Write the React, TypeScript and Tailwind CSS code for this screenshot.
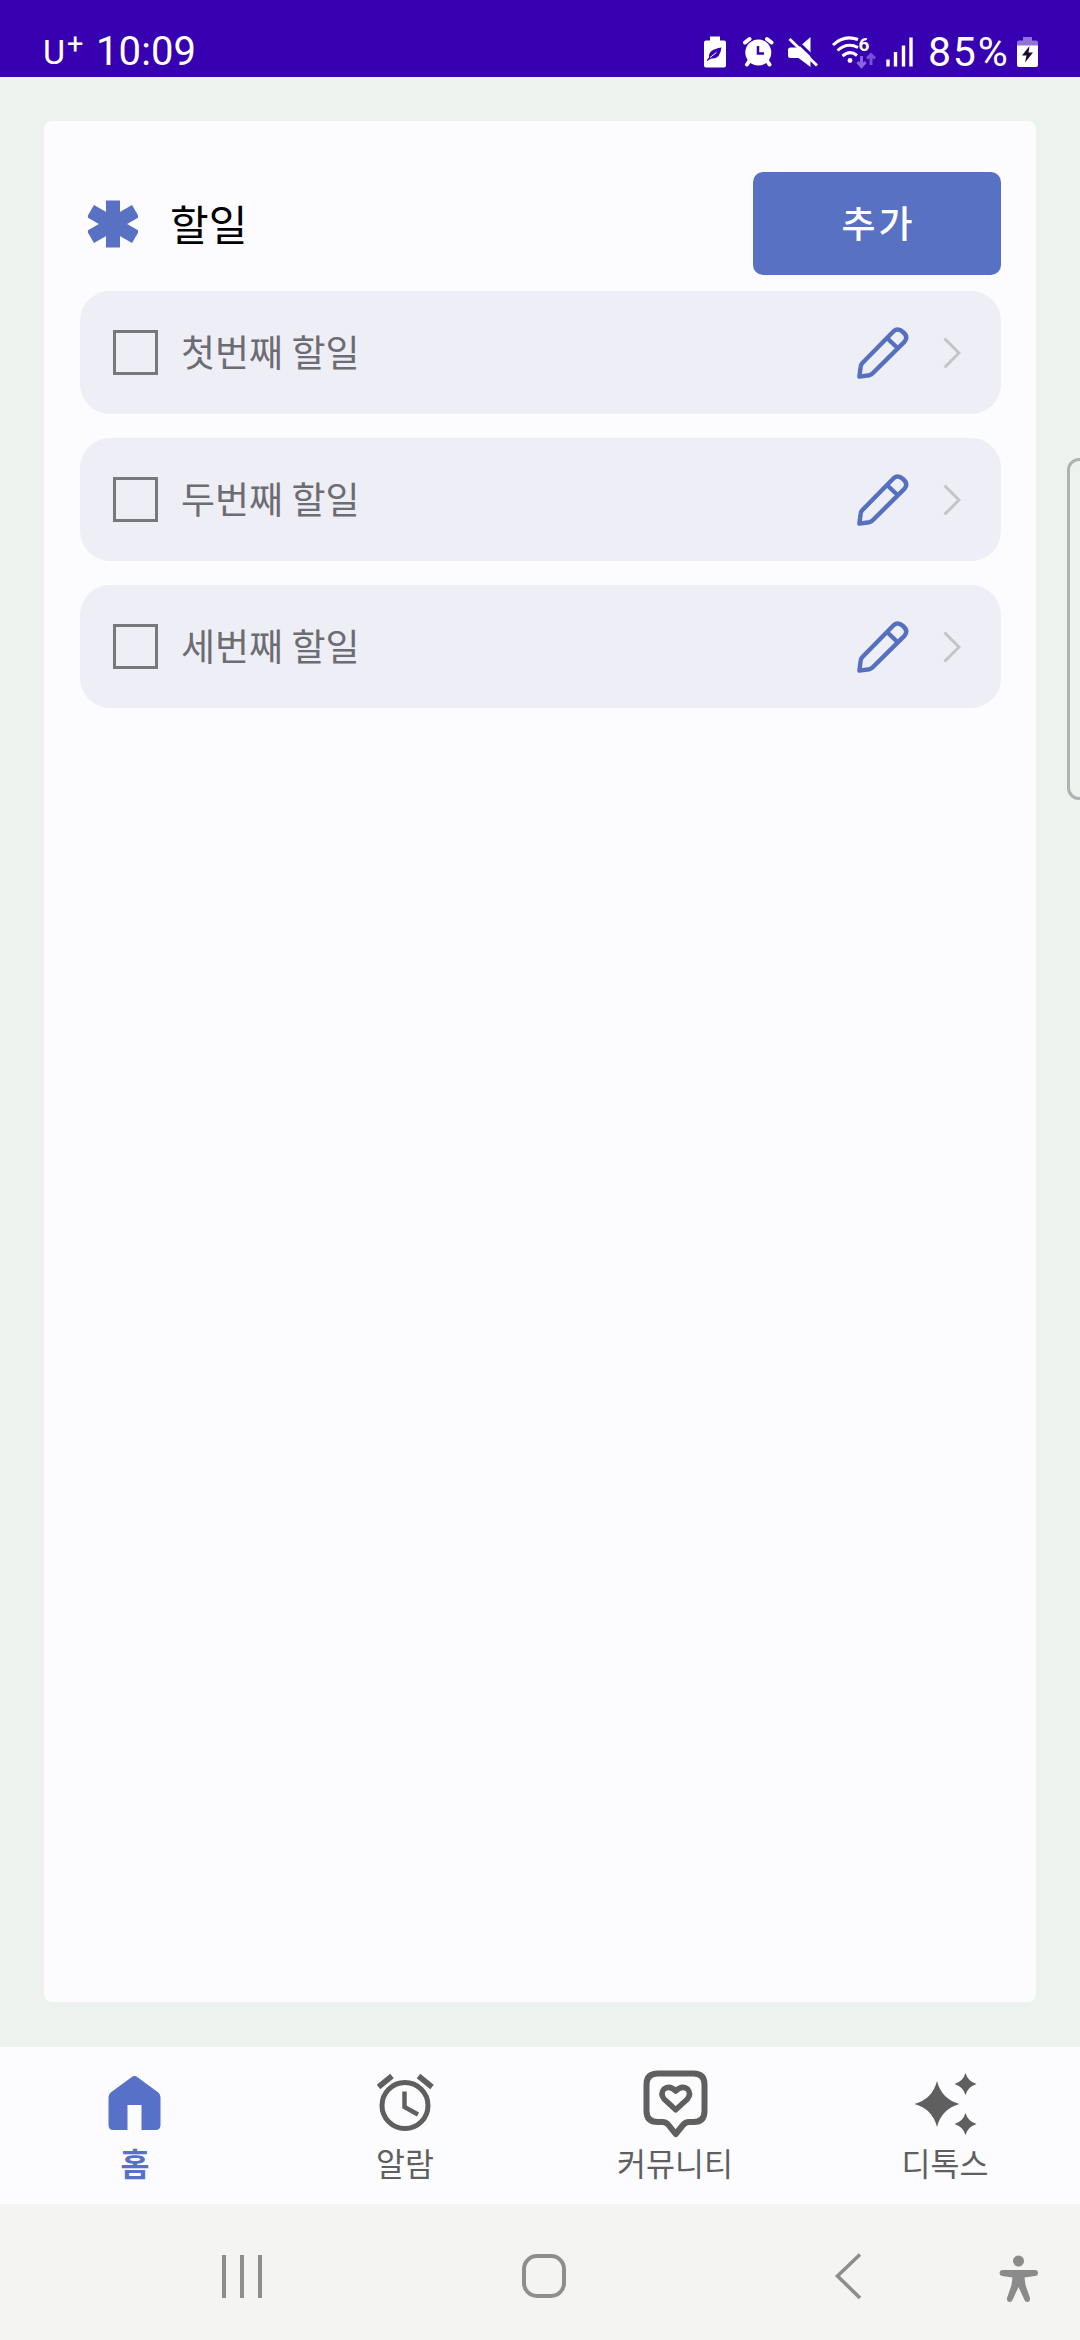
import { useState } from 'react';

const AsteriskIcon = () => (
  <svg className="h-[50px] w-[50px]" viewBox="0 0 50 50" fill="#5871c2">
    <rect x="18" y="1.5" width="14" height="47" />
    <rect x="18" y="-1" width="14" height="52" transform="rotate(60 25 25)" />
    <rect x="18" y="-1" width="14" height="52" transform="rotate(-60 25 25)" />
  </svg>
);

const PencilIcon = () => (
  <svg className="h-[54px] w-[54px]" viewBox="0 0 54 54" fill="none" stroke="#5670c0" strokeWidth="4.400" strokeLinejoin="round">
    <path d="M3.400 50.600 4.600 41Q4.800 38.600 6.400 37L37.600 5.200Q42 1.500 47 6 52.500 10.800 48.600 15.600L17 47Q15.400 48.600 13.400 49.200Z" />
    <path d="M31.500 12.500 41.500 22" />
  </svg>
);

const ChevronIcon = () => (
  <svg className="h-8 w-[18px]" viewBox="0 0 18 32" fill="none" stroke="#c4c4c8" strokeWidth="3">
    <path d="M1.5 1.5 16 16 1.5 30.5" />
  </svg>
);

const HomeIcon = () => (
  <svg className="h-[70px] w-[70px]" viewBox="99.500 2070 70 70">
    <path
      fill="currentColor"
      d="M131 2078.2Q134 2075.8 137 2078.2L157.5 2093.2Q160 2095 160 2098V2126Q160 2131 155 2131H141V2106H127V2131H113Q108 2131 108 2126V2098Q108 2095 110.500 2093.200Z"
    />
  </svg>
);

const AlarmIcon = () => (
  <svg className="h-[70px] w-[70px]" viewBox="370 2070 70 70" fill="none" stroke="currentColor" strokeWidth="5">
    <circle cx="405" cy="2106.500" r="23" />
    <path d="M404.500 2092.500V2108L418 2115.500" strokeWidth="4.500" />
    <path d="M378.500 2088 392 2077M418.500 2077 432 2088" strokeWidth="5.500" />
  </svg>
);

const CommunityIcon = () => (
  <svg className="h-[70px] w-[70px]" viewBox="640 2068.500 70 70" fill="none" stroke="currentColor" strokeWidth="6" strokeLinejoin="round">
    <path d="M658 2073H693.500Q704.500 2073 704.500 2084V2110.500Q704.500 2121.500 693.500 2121.500H689Q685.500 2121.500 683 2124.500L675.700 2133.500 668.500 2124.500Q666 2121.500 662.500 2121.500H658Q646.500 2121.500 646.500 2110.500V2084Q646.500 2073 658 2073Z" />
    <path d="M675.700 2109.300 664 2098.500Q660 2093 664 2088.500 670 2084.500 675.700 2090.500 681.500 2084.500 687.500 2088.500 691.500 2093 687.500 2098.500Z" strokeWidth="5.500" />
  </svg>
);

const SparkleIcon = () => (
  <svg className="h-[70px] w-[70px]" viewBox="909.500 2069 70 70" fill="currentColor">
    <path d="M936.500 2081Q941 2099 959 2104 941 2109 936.500 2127 932 2109 914 2104 932 2099 936.500 2081Z" />
    <path d="M965 2073Q967.500 2081.500 976 2084 967.500 2086.500 965 2095 962.500 2086.500 954 2084 962.500 2081.500 965 2073Z" />
    <path d="M965 2113Q967.500 2121.500 976 2124 967.500 2126.500 965 2135 962.500 2126.500 954 2124 962.500 2121.500 965 2113Z" />
  </svg>
);

const BatterySaverIcon = () => (
  <svg className="h-8 w-6" viewBox="703 35 24 32">
    <path fill="#fff" d="M710 35.500H720V39.500H724Q726 39.500 726 41.500V64.500Q726 66.500 724 66.500H706Q704 66.500 704 64.500V41.500Q704 39.500 706 39.500H710Z" />
    <path fill="#3700b0" d="M721.500 46.500Q720 58.500 711.500 57.500 708.500 58.500 707.500 60L706.800 59.200Q708 57.500 709 56.500 708 48.500 721.500 46.500Z" />
    <path stroke="#fff" strokeWidth="1" d="M710 56.500 716.500 51.500" />
  </svg>
);

const AlarmSetIcon = () => (
  <svg className="h-8 w-8" viewBox="741.500 35 32 32">
    <path stroke="#fff" strokeWidth="4" strokeLinecap="round" d="M744.500 41.500 749 38M766.500 38 771 41.500M748.500 60.500 746.500 63.500M767 60.500 769 63.500" />
    <circle cx="757.800" cy="51.500" r="13" fill="#fff" />
    <path stroke="#3700b0" strokeWidth="2.500" fill="none" d="M757.500 45V52.500H763.500" />
  </svg>
);

const MuteIcon = () => (
  <svg className="h-8 w-8" viewBox="786.500 35 32 32">
    <path fill="#fff" d="M790 46.500H798L810 36V66L798 57H790Q787.500 57 787.500 54.500V49Q787.500 46.500 790 46.500Z" />
    <path stroke="#3700b0" strokeWidth="3" d="M792 36 819 62" />
    <path stroke="#fff" strokeWidth="3" d="M789 38 816.500 64.500" />
  </svg>
);

const WifiIcon = () => (
  <svg className="h-[34px] w-11 overflow-visible" viewBox="832 34 44 34" fill="none">
    <g stroke="#fff" strokeWidth="3">
      <path d="M833 44Q844 33.500 858 38.500" />
      <path d="M837.500 49.500Q847 41 858 46.500" />
      <path d="M842.500 55Q850 48.500 857 54.500" />
    </g>
    <circle cx="850" cy="59.500" r="2.400" fill="#fff" />
    <text x="858.500" y="50" fill="#fff" fontSize="19" fontWeight="700" fontFamily="Roboto, sans-serif">6</text>
    <path stroke="#8a63e0" strokeWidth="3" d="M861.500 55V65M857.500 61 861.500 65.500 865.500 61" />
    <path stroke="#7850d8" strokeWidth="3" d="M871 64V54M867 57.500 871 53.500 875 57.500" />
  </svg>
);

const SignalIcon = () => (
  <svg className="h-8 w-7" viewBox="886 35 28 32" stroke="#fff" strokeWidth="3.400">
    <path d="M888 58.500V65.500M895.500 51V65.500M903.500 44.500V65.500M911 36.500V65.500" />
  </svg>
);

const ChargingIcon = () => (
  <svg className="h-8 w-6" viewBox="1015 35 24 32">
    <path fill="#9272d9" d="M1022 36H1031V39.500H1035Q1037 39.500 1037 41.500V45H1016V41.500Q1016 39.500 1018 39.500H1022Z" />
    <path fill="#fff" d="M1016 44.500H1037V64Q1037 66 1035 66H1018Q1016 66 1016 64Z" />
    <path fill="#1a0a33" d="M1028.500 45 1021 54.500H1025.500L1024 61.500 1032 51.500H1027.500Z" />
  </svg>
);

const StatusBar = () => (
  <header className="flex h-[77px] shrink-0 items-end bg-[#3700b0] pb-[9px] pl-[43px] font-[Roboto,sans-serif] text-white">
    <div className="flex h-8 w-[660px] items-center text-[40px] leading-8">
      <span className="w-6 text-[34px]">U</span>
      <span className="w-[29px] -translate-y-2 text-[29px]">+</span>
      <span className="tracking-[0.1px]">10:09</span>
    </div>
    <div className="flex h-8 items-center">
      <BatterySaverIcon />
      <div className="ml-[15px]"><AlarmSetIcon /></div>
      <div className="ml-[13px]"><MuteIcon /></div>
      <div className="ml-[13px]"><WifiIcon /></div>
      <div className="ml-[10px]"><SignalIcon /></div>
      <span className="ml-[14px] w-[88px] text-[41px] leading-8 tracking-[1.8px]">85%</span>
      <ChargingIcon />
    </div>
  </header>
);

const todos = [
  { id: 1, title: '첫번째 할일' },
  { id: 2, title: '두번째 할일' },
  { id: 3, title: '세번째 할일' },
];

const tabs = [
  { key: 'home', label: '홈', Icon: HomeIcon },
  { key: 'alarm', label: '알람', Icon: AlarmIcon },
  { key: 'community', label: '커뮤니티', Icon: CommunityIcon },
  { key: 'detox', label: '디톡스', Icon: SparkleIcon },
];

const TodoRow = ({ title }: { title: string }) => {
  const [checked, setChecked] = useState(false);

  return (
    <li className="flex h-[123px] items-center rounded-[30px] bg-[#eeeef6] pr-[40px] pl-[33px]">
      <button
        aria-label={title}
        onClick={() => setChecked(!checked)}
        className={`h-[45px] w-[45px] border-3 border-[#77777c] ${checked ? 'bg-[#5871c2]' : ''}`}
      />
      <span className="mb-[3px] ml-[23px] flex-1 text-[37px] leading-[54px] text-[#6c6c72]">{title}</span>
      <PencilIcon />
      <div className="ml-[33px]"><ChevronIcon /></div>
    </li>
  );
};

export default function App() {
  const [activeTab, setActiveTab] = useState('home');

  return (
    <div className="relative flex h-[2340px] w-[1080px] flex-col overflow-hidden bg-[#eef2ee] font-['Noto_Sans_CJK_KR',sans-serif]">
      <StatusBar />

      <main className="flex flex-1 flex-col px-[44px] pt-[44px] pb-[45px]">
        <section className="flex-1 rounded-lg bg-[#fcfcfe] pt-[51px] pr-[35px] pl-[36px]">
          <div className="flex h-[103px] items-center pl-2">
            <AsteriskIcon />
            <h1 className="mb-[2px] ml-[32px] flex-1 text-[42px] leading-[60px] text-black">할일</h1>
            <button className="h-[103px] w-[248px] rounded-[10px] bg-[#5871c2] pb-px pl-[3px] text-[37px] font-medium tracking-[3px] text-white">
              추가
            </button>
          </div>

          <ul className="mt-4 flex flex-col gap-6">
            {todos.map((todo) => (
              <TodoRow key={todo.id} title={todo.title} />
            ))}
          </ul>
        </section>
      </main>

      {/* Bottom tabs */}
      <nav className="grid h-[157px] shrink-0 grid-cols-4 bg-[#fcfcfe]">
        {tabs.map(({ key, label, Icon }) => (
          <button
            key={key}
            onClick={() => setActiveTab(key)}
            className={`flex flex-col items-center pt-[22px] ${
              activeTab === key ? 'font-bold text-[#5871c8]' : 'text-[#5f5f5f]'
            }`}
          >
            <Icon />
            <span className="text-[31.5px] leading-[46px]">{label}</span>
          </button>
        ))}
      </nav>

      {/* System navigation */}
      <footer className="flex h-[136px] shrink-0 items-center bg-[#f4f4f3] pt-[8px] pl-[222px]">
        <div className="flex gap-[14px]">
          <div className="h-[43px] w-1 bg-[#8e8e8e]" />
          <div className="h-[43px] w-1 bg-[#8e8e8e]" />
          <div className="h-[43px] w-1 bg-[#8e8e8e]" />
        </div>
        <div className="ml-[260px] h-[44px] w-[44px] rounded-[15px] border-4 border-[#8e8e8e]" />
        <svg className="ml-[268px] h-[48px] w-[30px]" viewBox="833 2252 30 48" fill="none" stroke="#8e8e8e" strokeWidth="3.600">
          <path d="M859 2254.500 836.500 2276 859 2298" />
        </svg>
        <svg className="mt-[6px] ml-[134px] h-[50px] w-[42px]" viewBox="997 2254 42 50" fill="#8b8b8b">
          <circle cx="1017.500" cy="2261" r="5.500" />
          <path d="M1001 2270H1034Q1037 2270 1037 2273T1034 2276L1023.500 2277.500 1024.500 2285 1029 2298Q1029.500 2301.500 1027 2302 1024.500 2302.500 1023.500 2300L1017.500 2287 1011.500 2300Q1010.500 2302.500 1008 2302 1005.500 2301.500 1006 2298L1010.500 2285 1011.500 2277.500 1001 2276Q998.500 2275.500 998.500 2273T1001 2270Z" />
        </svg>
      </footer>

      {/* Edge panel handle */}
      <div className="absolute top-[458px] left-[1067px] h-[342px] w-6 rounded-[14px] border-[3px] border-[#b0b1b3]" />
    </div>
  );
}
